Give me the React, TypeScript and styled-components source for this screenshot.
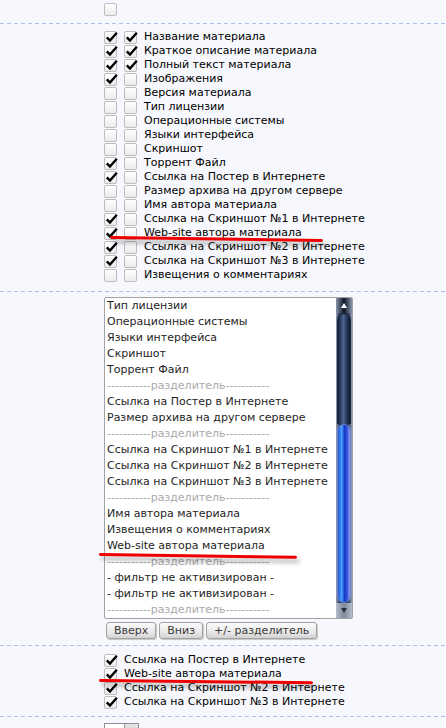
import styled, { createGlobalStyle } from 'styled-components'

// --- Global ---

const GlobalStyle = createGlobalStyle`
  html, body {
    margin: 0;
    padding: 0;
    background: #f7f8fd;
  }
  body {
    font-family: "DejaVu Sans", Verdana, sans-serif;
    font-size: 11px;
    color: #000;
  }
`;

// --- Layout ---

const Page = styled.div`
  position: relative;
  width: 446px;
  height: 728px;
  overflow: hidden;
`;

const Section = styled.div<{ $pt: number; $pb: number }>`
  padding: ${p => p.$pt}px 0 ${p => p.$pb}px 104px;
`;

const Dashed = styled.div`
  height: 1px;
  background: repeating-linear-gradient(to right, #a9bfee 0 4px, transparent 4px 7px);
`;

// --- Checkboxes ---

const Box = styled.span`
  position: relative;
  display: inline-block;
  flex: none;
  width: 13px;
  height: 13px;
  box-sizing: border-box;
  border: 1px solid #bdbdbd;
  border-radius: 2px;
  background: linear-gradient(#ffffff, #ececec);

  svg {
    position: absolute;
    left: -1px;
    top: -2px;
  }
`;

const Row = styled.div<{ $gap: number }>`
  display: flex;
  align-items: center;
  gap: ${p => p.$gap}px;
  height: 14px;
  line-height: 14px;
  white-space: nowrap;
`;

function Check({ on }: { on?: boolean }) {
  return (
    <Box>
      {on && (
        <svg width="15" height="15" viewBox="0 0 15 15">
          <path d="M2.8 7.3 L6 10.6 L12.8 2.8" fill="none" stroke="#000" strokeWidth="2.4" />
        </svg>
      )}
    </Box>
  )
}

// --- List box ---

const ListBox = styled.div`
  display: flex;
  width: 249px;
  height: 322px;
  box-sizing: border-box;
  border: 1px solid #a3a3a3;
  border-radius: 2px;
  background: #fff;
  overflow: hidden;
`;

const Items = styled.div`
  flex: 1;
  overflow: hidden;
  padding-left: 2px;
`;

const Item = styled.div<{ $sep?: boolean }>`
  height: 16px;
  line-height: 16px;
  white-space: nowrap;
  color: ${p => (p.$sep ? '#a9a9a9' : '#1e1e1e')};
`;

const ScrollBar = styled.div`
  display: flex;
  flex-direction: column;
  width: 16px;
  background: linear-gradient(to right, #98a4b8 0, #3a4660 3px, #0b1324 8px, #3a4660 13px, #98a4b8 16px);
`;

const Arrow = styled.div<{ $down?: boolean }>`
  height: 15px;
  display: flex;
  align-items: center;
  justify-content: center;
  background: ${p =>
    p.$down
      ? 'linear-gradient(to right, #b4bdca, #7d8898 50%, #b4bdca)'
      : 'linear-gradient(to right, #8a96aa, #0d1426 50%, #8a96aa)'};

  &::after {
    content: '';
    border-left: 3px solid transparent;
    border-right: 3px solid transparent;
    ${p =>
      p.$down
        ? 'border-top: 5px solid #2a2f38;'
        : 'border-bottom: 5px solid #ffffff;'}
  }
`;

const Track = styled.div`
  flex: 110px 0 0;
  margin: 0 1px;
  border-radius: 7px 7px 0 0;
  border: 1px solid #18243c;
  border-bottom: none;
  background: linear-gradient(to right, #15213a, #4b6590 45%, #2a3d60 70%, #111a2e);
`;

const Thumb = styled.div`
  flex: 1;
  margin: 0 1px;
  border-radius: 7px;
  border: 1px solid #6f86d8;
  background: linear-gradient(to right, #2a4fc8, #45a2ff 30%, #1638c8 55%, #3050d8 75%, #8fa0e8);
`;

// --- Buttons ---

const ButtonRow = styled.div`
  display: flex;
  gap: 3px;
  margin-top: 3px;
  padding-left: 2px;
`;

const Button = styled.button`
  height: 17px;
  padding: 0 7px;
  font-family: "DejaVu Sans", Verdana, sans-serif;
  font-size: 11px;
  line-height: 15px;
  color: #3a3a3a;
  border: 1px solid #a3a3a3;
  border-radius: 3px;
  background: linear-gradient(#fbfbfb, #e9e9e9 60%, #d2d2d2);
  box-shadow: 1px 1px 0 #c8c8c8;
`;

// --- Bottom select stub ---

const SelectStub = styled.div`
  display: flex;
  width: 35px;
  height: 14px;
  box-sizing: border-box;
  border: 1px solid #8f8f8f;
  border-bottom: none;
  background: #fff;
`;

const SelectKnob = styled.div`
  margin-left: auto;
  width: 13px;
  background: linear-gradient(#e6e6e6, #c4c4c4);
  border-left: 1px solid #9a9a9a;
`;

// --- Red annotation marks ---

const Mark = styled.div<{ $x: number; $y: number; $w: number; $deg: number }>`
  position: absolute;
  left: ${p => p.$x}px;
  top: ${p => p.$y}px;
  width: ${p => p.$w}px;
  height: 3px;
  border-radius: 2px;
  background: #ee0000;
  transform-origin: left center;
  transform: rotate(${p => p.$deg}deg);
  box-shadow: 3px 4px 4px rgba(0, 0, 0, 0.32);
`;

// --- Data ---

const fields: [string, boolean, boolean][] = [
  ['Название материала', true, true],
  ['Краткое описание материала', true, true],
  ['Полный текст материала', true, true],
  ['Изображения', true, false],
  ['Версия материала', false, false],
  ['Тип лицензии', false, false],
  ['Операционные системы', false, false],
  ['Языки интерфейса', false, false],
  ['Скриншот', false, false],
  ['Торрент Файл', true, false],
  ['Ссылка на Постер в Интернете', true, false],
  ['Размер архива на другом сервере', false, false],
  ['Имя автора материала', false, false],
  ['Ссылка на Скриншот №1 в Интернете', true, false],
  ['Web-site автора материала', true, false],
  ['Ссылка на Скриншот №2 в Интернете', true, false],
  ['Ссылка на Скриншот №3 в Интернете', true, false],
  ['Извещения о комментариях', false, false],
]

const SEP = '-----------разделитель-----------'

const order = [
  'Тип лицензии',
  'Операционные системы',
  'Языки интерфейса',
  'Скриншот',
  'Торрент Файл',
  SEP,
  'Ссылка на Постер в Интернете',
  'Размер архива на другом сервере',
  SEP,
  'Ссылка на Скриншот №1 в Интернете',
  'Ссылка на Скриншот №2 в Интернете',
  'Ссылка на Скриншот №3 в Интернете',
  SEP,
  'Имя автора материала',
  'Извещения о комментариях',
  'Web-site автора материала',
  SEP,
  '- фильтр не активизирован -',
  '- фильтр не активизирован -',
  SEP,
]

const picked = [
  'Ссылка на Постер в Интернете',
  'Web-site автора материала',
  'Ссылка на Скриншот №2 в Интернете',
  'Ссылка на Скриншот №3 в Интернете',
]

export default function App() {
  return (
    <Page>
      <GlobalStyle />

      <Section $pt={2} $pb={7}>
        <Row $gap={0}>
          <Check />
        </Row>
      </Section>
      <Dashed />

      <Section $pt={6} $pb={9}>
        {fields.map(([name, a, b]) => (
          <Row key={name} $gap={7}>
            <Check on={a} />
            <Check on={b} />
            <span>{name}</span>
          </Row>
        ))}
      </Section>
      <Dashed />

      <Section $pt={5} $pb={6}>
        <ListBox>
          <Items>
            {order.map((t, i) => (
              <Item key={i} $sep={t === SEP}>{t}</Item>
            ))}
          </Items>
          <ScrollBar>
            <Arrow />
            <Track />
            <Thumb />
            <Arrow $down />
          </ScrollBar>
        </ListBox>
        <ButtonRow>
          <Button>Вверх</Button>
          <Button>Вниз</Button>
          <Button>+/- разделитель</Button>
        </ButtonRow>
      </Section>
      <Dashed />

      <Section $pt={7} $pb={7}>
        {picked.map(name => (
          <Row key={name} $gap={7}>
            <Check on />
            <span>{name}</span>
          </Row>
        ))}
      </Section>
      <Dashed />

      <Section $pt={6} $pb={0}>
        <SelectStub>
          <SelectKnob />
        </SelectStub>
      </Section>

      <Mark $x={110} $y={236} $w={213} $deg={0.8} />
      <Mark $x={99} $y={553} $w={198} $deg={0.8} />
      <Mark $x={99} $y={679} $w={214} $deg={0.6} />
    </Page>
  )
}
